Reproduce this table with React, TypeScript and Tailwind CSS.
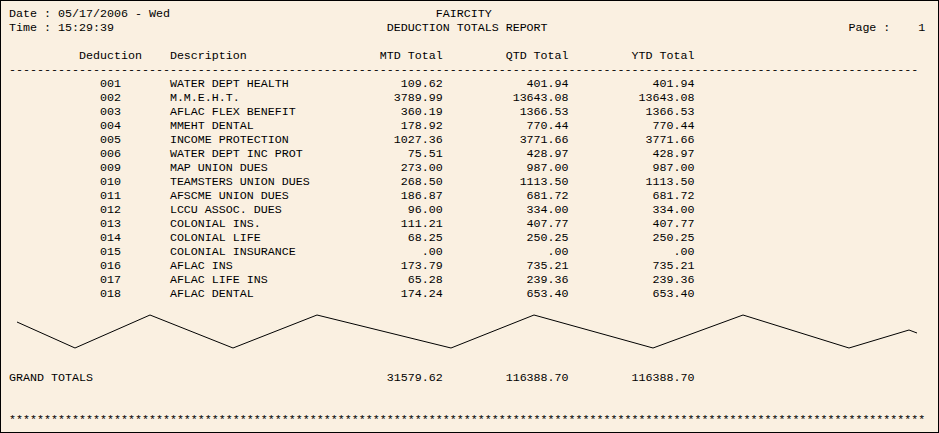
import React from "react";

type Seg = [number, string, "l" | "r"];

function line(segs: Seg[]): string {
  const arr: string[] = Array(140).fill(" ");
  for (const [col, text, align] of segs) {
    const start = align === "l" ? col : col - text.length;
    for (let i = 0; i < text.length; i++) arr[start + i] = text[i];
  }
  return arr.join("").replace(/\s+$/, "");
}

const rows: [string, string, string, string, string][] = [
  ["001", "WATER DEPT HEALTH", "109.62", "401.94", "401.94"],
  ["002", "M.M.E.H.T.", "3789.99", "13643.08", "13643.08"],
  ["003", "AFLAC FLEX BENEFIT", "360.19", "1366.53", "1366.53"],
  ["004", "MMEHT DENTAL", "178.92", "770.44", "770.44"],
  ["005", "INCOME PROTECTION", "1027.36", "3771.66", "3771.66"],
  ["006", "WATER DEPT INC PROT", "75.51", "428.97", "428.97"],
  ["009", "MAP UNION DUES", "273.00", "987.00", "987.00"],
  ["010", "TEAMSTERS UNION DUES", "268.50", "1113.50", "1113.50"],
  ["011", "AFSCME UNION DUES", "186.87", "681.72", "681.72"],
  ["012", "LCCU ASSOC. DUES", "96.00", "334.00", "334.00"],
  ["013", "COLONIAL INS.", "111.21", "407.77", "407.77"],
  ["014", "COLONIAL LIFE", "68.25", "250.25", "250.25"],
  ["015", "COLONIAL INSURANCE", ".00", ".00", ".00"],
  ["016", "AFLAC INS", "173.79", "735.21", "735.21"],
  ["017", "AFLAC LIFE INS", "65.28", "239.36", "239.36"],
  ["018", "AFLAC DENTAL", "174.24", "653.40", "653.40"],
];

const topLines: string[] = [
  line([
    [0, "Date : 05/17/2006 - Wed", "l"],
    [61, "FAIRCITY", "l"],
  ]),
  line([
    [0, "Time : 15:29:39", "l"],
    [54, "DEDUCTION TOTALS REPORT", "l"],
    [120, "Page :", "l"],
    [130, "1", "l"],
  ]),
  "",
  line([
    [10, "Deduction", "l"],
    [23, "Description", "l"],
    [62, "MTD Total", "r"],
    [80, "QTD Total", "r"],
    [98, "YTD Total", "r"],
  ]),
  "-".repeat(130),
  ...rows.map((r) =>
    line([
      [13, r[0], "l"],
      [23, r[1], "l"],
      [62, r[2], "r"],
      [80, r[3], "r"],
      [98, r[4], "r"],
    ])
  ),
];

const bottomLines: string[] = [
  line([
    [0, "GRAND TOTALS", "l"],
    [62, "31579.62", "r"],
    [80, "116388.70", "r"],
    [98, "116388.70", "r"],
  ]),
  "",
  "",
  "*".repeat(131),
];

const zig: [number, number][] = [
  [17, 322],
  [75, 348],
  [150, 315],
  [233, 348],
  [317, 315],
  [451, 348],
  [534, 315],
  [653, 348],
  [743, 315],
  [849, 348],
  [909, 330],
  [917, 333],
];

export default function App() {
  const top = 301;
  const pts = zig.map(([x, y]) => `${x - 1},${y - top}`).join(" ");
  return (
    <div className="w-[939px] h-[433px] border border-black bg-[#FAF0E1] text-black overflow-hidden">
      <div
        className="pt-[6px] text-[11.667px] leading-[14px]"
        style={{ fontFamily: '"Liberation Mono", "Courier New", monospace' }}
      >
        {topLines.map((l, i) => (
          <div key={i} className="h-[14px] pl-[8px] whitespace-pre">
            {l}
          </div>
        ))}
        <svg width="937" height="70" className="block">
          <polyline points={pts} fill="none" stroke="#000" strokeWidth="1" />
        </svg>
        {bottomLines.map((l, i) => (
          <div key={i} className="h-[14px] pl-[8px] whitespace-pre">
            {l}
          </div>
        ))}
      </div>
    </div>
  );
}
